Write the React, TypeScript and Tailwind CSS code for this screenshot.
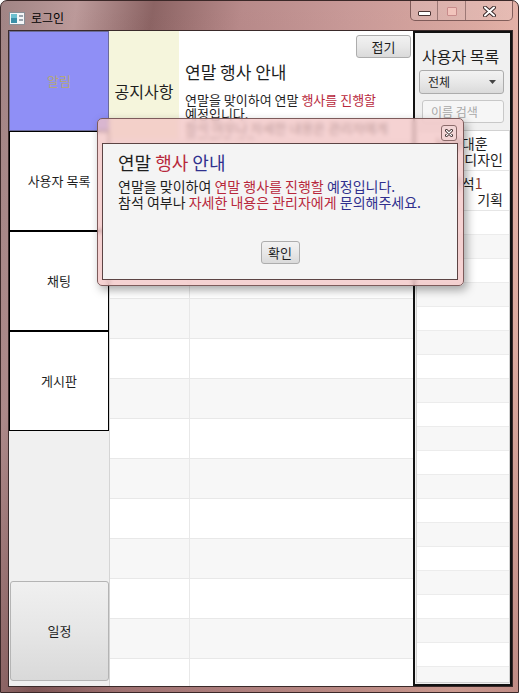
import React from "react";

// window icon in the caption
const WinIcon = () => (
  <svg width="16" height="13" viewBox="0 0 16 13">
    <rect x="0.5" y="0.5" width="15" height="12" fill="#f4f6f8" stroke="#8a8f96" />
    <rect x="2" y="2" width="6" height="9" fill="#3a8fa8" />
    <rect x="2" y="2" width="6" height="4" fill="#6cc0d0" />
    <rect x="10" y="3" width="4" height="2" fill="#9aa3ad" />
    <rect x="10" y="7" width="4" height="2" fill="#9aa3ad" />
  </svg>
);

const NavItem = ({ label }: { label: string }) => (
  <div className="flex h-[100px] shrink-0 items-center justify-center border border-black bg-white text-[13px]">
    {label}
  </div>
);

const red = "text-[#b8283c]";
const blue = "text-[#30308e]";

export default function App() {
  const gridRows = Array.from({ length: 14 });
  const listRows = Array.from({ length: 20 });

  return (
    <div className="relative flex h-[693px] w-[519px] flex-col overflow-hidden rounded-t-[7px] border border-[#3b2828] bg-[linear-gradient(180deg,rgba(0,0,0,0)_0%,rgba(70,25,25,0.22)_100%),linear-gradient(100deg,#a08484_0%,#bc9a9a_12%,#8c6464_24%,#b88a8a_38%,#c99a98_55%,#dcaaa2_75%,#efbcb0_90%,#e2aca4_100%)] font-['Noto_Sans_CJK_KR',sans-serif] text-[#1e1e1e]">
      {/* Title bar */}
      <div className="flex h-[29px] shrink-0">
        <div className="flex items-center gap-[6px] self-start pl-[8px] pt-[9px]">
          <WinIcon />
          <span className="text-[12px] leading-[16px] text-black">로그인</span>
        </div>
        <div className="ml-auto mr-[5px] -mt-px flex h-[21px] self-start overflow-hidden rounded-b-[5px] border border-t-0 border-[#5a3c3c]/70">
          <div className="flex w-[27px] items-start justify-center border-r border-[#5a3c3c]/50 bg-white/15 pt-[11px]">
            <div className="h-[5px] w-[13px] rounded-[1px] border border-[#4a3434] bg-white" />
          </div>
          <div className="flex w-[28px] items-start justify-center border-r border-[#5a3c3c]/50 bg-white/15 pt-[7px]">
            <div className="h-[9px] w-[10px] rounded-[1px] border border-[#c88c8c] bg-[#f2c4bc]" />
          </div>
          <div className="flex w-[46px] items-start justify-center bg-white/15 pt-[6px]">
            <svg width="13" height="11" viewBox="0 0 13 11">
              <path d="M2 1.5 L11 9.5 M11 1.5 L2 9.5" stroke="#3a2a2a" strokeWidth="4" strokeLinecap="round" />
              <path d="M2 1.5 L11 9.5 M11 1.5 L2 9.5" stroke="#ffffff" strokeWidth="2" strokeLinecap="round" />
            </svg>
          </div>
        </div>
      </div>

      {/* Client area */}
      <div className="mb-[5px] ml-[7px] mr-[5px] flex flex-1 overflow-hidden border border-[#3a2a2a] bg-[#f0f0f0]">
        {/* Left navigation */}
        <div className="flex w-[100px] shrink-0 flex-col bg-[#f0f0f0]">
          <div className="flex h-[100px] shrink-0 items-center justify-center border border-[#6a6a9a] bg-[#8f8ff6] text-[13px] text-[#b3a77c]">
            알림
          </div>
          <NavItem label="사용자 목록" />
          <NavItem label="채팅" />
          <NavItem label="게시판" />
          <div className="flex-1" />
          <button className="mb-[5px] ml-px flex h-[100px] w-[99px] shrink-0 items-center justify-center rounded-[3px] border border-[#b4b4b4] bg-[linear-gradient(180deg,#f0f0f0_0%,#e6e6e6_50%,#d9d9d9_100%)] text-[13px]">
            일정
          </button>
        </div>

        {/* Middle: notice + grid */}
        <div className="flex w-[304px] shrink-0 flex-col bg-white">
          <div className="flex h-[108px] shrink-0">
            <div className="flex w-[70px] items-center justify-center bg-[#f5f5dc] pt-[11px] text-[16px]">
              공지사항
            </div>
            <div className="flex flex-1 flex-col bg-white pl-[6px] pr-[2px]">
              <div className="flex justify-end pt-[4px]">
                <button className="flex h-[23px] w-[55px] items-center justify-center rounded-[3px] border border-[#adadad] bg-[linear-gradient(180deg,#f2f2f2_0%,#e8e8e8_50%,#dadada_100%)] text-[13px]">
                  접기
                </button>
              </div>
              <div className="mt-[4px] text-[17px] leading-[20px]">연말 행사 안내</div>
              <div className="mt-[11px] w-[215px] break-keep text-[13px] leading-[14px]">
                <p>
                  연말을 맞이하여 연말 <span className={red}>행사를 진행할</span> 예정입니다.
                </p>
                <p>참석 여부나 자세한 내용은 관리자에게 문의해주세요.</p>
              </div>
            </div>
          </div>
          <div className="flex-1 overflow-hidden border-l border-[#d5d5d5]">
            {gridRows.map((_, i) => (
              <div
                key={i}
                className={
                  i % 2 === 0
                    ? "flex h-[40px] border-b border-[#e8e8e8] bg-[#f7f7f7]"
                    : "flex h-[40px] border-b border-[#e8e8e8] bg-white"
                }
              >
                <div className="w-[80px] border-r border-[#e8e8e8]" />
                <div className="flex-1" />
              </div>
            ))}
          </div>
        </div>

        {/* Right: user list panel */}
        <div className="flex flex-1 flex-col border-2 border-[#111111] bg-[#f0f0f0]">
          <div className="pl-[7px] pt-[13px] text-[16px] leading-[20px]">사용자 목록</div>
          <div className="ml-[4px] mt-[4px] flex h-[24px] w-[85px] items-center justify-between rounded-[3px] border border-[#acacac] bg-[linear-gradient(180deg,#f2f2f2_0%,#e8e8e8_50%,#dadada_100%)] pl-[8px] pr-[7px] text-[12px]">
            <span>전체</span>
            <svg width="7" height="4" viewBox="0 0 7 4">
              <path d="M0 0 L7 0 L3.5 4 Z" fill="#444" />
            </svg>
          </div>
          <div className="ml-[7px] mt-[6px] flex h-[23px] w-[82px] items-center rounded-[3px] border border-[#c8c8c8] bg-[#f6f6f6] pl-[8px] text-[12px] text-[#a8a8a8]">
            이름 검색
          </div>
          <div className="mb-px ml-px mt-[7px] flex-1 overflow-hidden border border-[#d2d2d2] bg-white">
            <div className="flex h-[40px] flex-col border-b border-[#e6e6e6] pl-[19px] pr-[6px] pt-[4px] text-[14px] leading-[16px]">
              <span>남궁대훈</span>
              <span className="self-end">디자인</span>
            </div>
            <div className="flex h-[40px] flex-col border-b border-[#e6e6e6] pl-[19px] pr-[6px] pt-[4px] text-[14px] leading-[16px]">
              <span>
                김민석<span className="text-[#8a3a2a]">1</span>
              </span>
              <span className="self-end">기획</span>
            </div>
            {listRows.map((_, i) => (
              <div
                key={i}
                className={
                  i % 2 === 0
                    ? "h-[24px] border-b border-[#ececec] bg-white"
                    : "h-[24px] border-b border-[#ececec] bg-[#f7f7f7]"
                }
              />
            ))}
          </div>
        </div>
      </div>

      {/* Message dialog */}
      <div className="absolute left-[96px] top-[117px] flex h-[168px] w-[367px] flex-col rounded-[5px] border border-[#7d5b5b] bg-[#f1c3c3]/75 shadow-[3px_4px_10px_rgba(0,0,0,0.35)] backdrop-blur-[2px]">
        <div className="flex h-[24px] shrink-0 items-start justify-end pr-[6px] pt-[6px]">
          <div className="flex h-[16px] w-[16px] items-center justify-center rounded-[3px] border border-[#8b6a6a] bg-[#f3d6d6]">
            <svg width="8" height="8" viewBox="0 0 8 8">
              <path d="M1.5 1.5 L6.5 6.5 M6.5 1.5 L1.5 6.5" stroke="#3a2a2a" strokeWidth="3" strokeLinecap="round" />
              <path d="M1.5 1.5 L6.5 6.5 M6.5 1.5 L1.5 6.5" stroke="#ffffff" strokeWidth="1.2" strokeLinecap="round" />
            </svg>
          </div>
        </div>
        <div className="mb-[5px] ml-[4px] mr-[5px] flex flex-1 flex-col border border-[#5c4444] bg-[#f4f4f4] pl-[15px] pt-[7px]">
          <div className="text-[18px] leading-[22px]">
            연말 <span className={red}>행사</span> <span className={blue}>안내</span>
          </div>
          <div className="mt-[5px] break-keep text-[14px] leading-[16px]">
            <p>
              연말을 맞이하여 <span className={red}>연말 행사를 진행할</span>{" "}
              <span className={blue}>예정입니다.</span>
            </p>
            <p>
              참석 여부나 <span className={red}>자세한 내용은 관리자에게</span>{" "}
              <span className={blue}>문의해주세요.</span>
            </p>
          </div>
          <div className="mt-[31px] flex justify-center pr-[15px]">
            <button className="flex h-[23px] w-[39px] items-center justify-center rounded-[3px] border border-[#adadad] bg-[linear-gradient(180deg,#f2f2f2_0%,#e8e8e8_50%,#dadada_100%)] text-[13px]">
              확인
            </button>
          </div>
        </div>
      </div>
    </div>
  );
}
